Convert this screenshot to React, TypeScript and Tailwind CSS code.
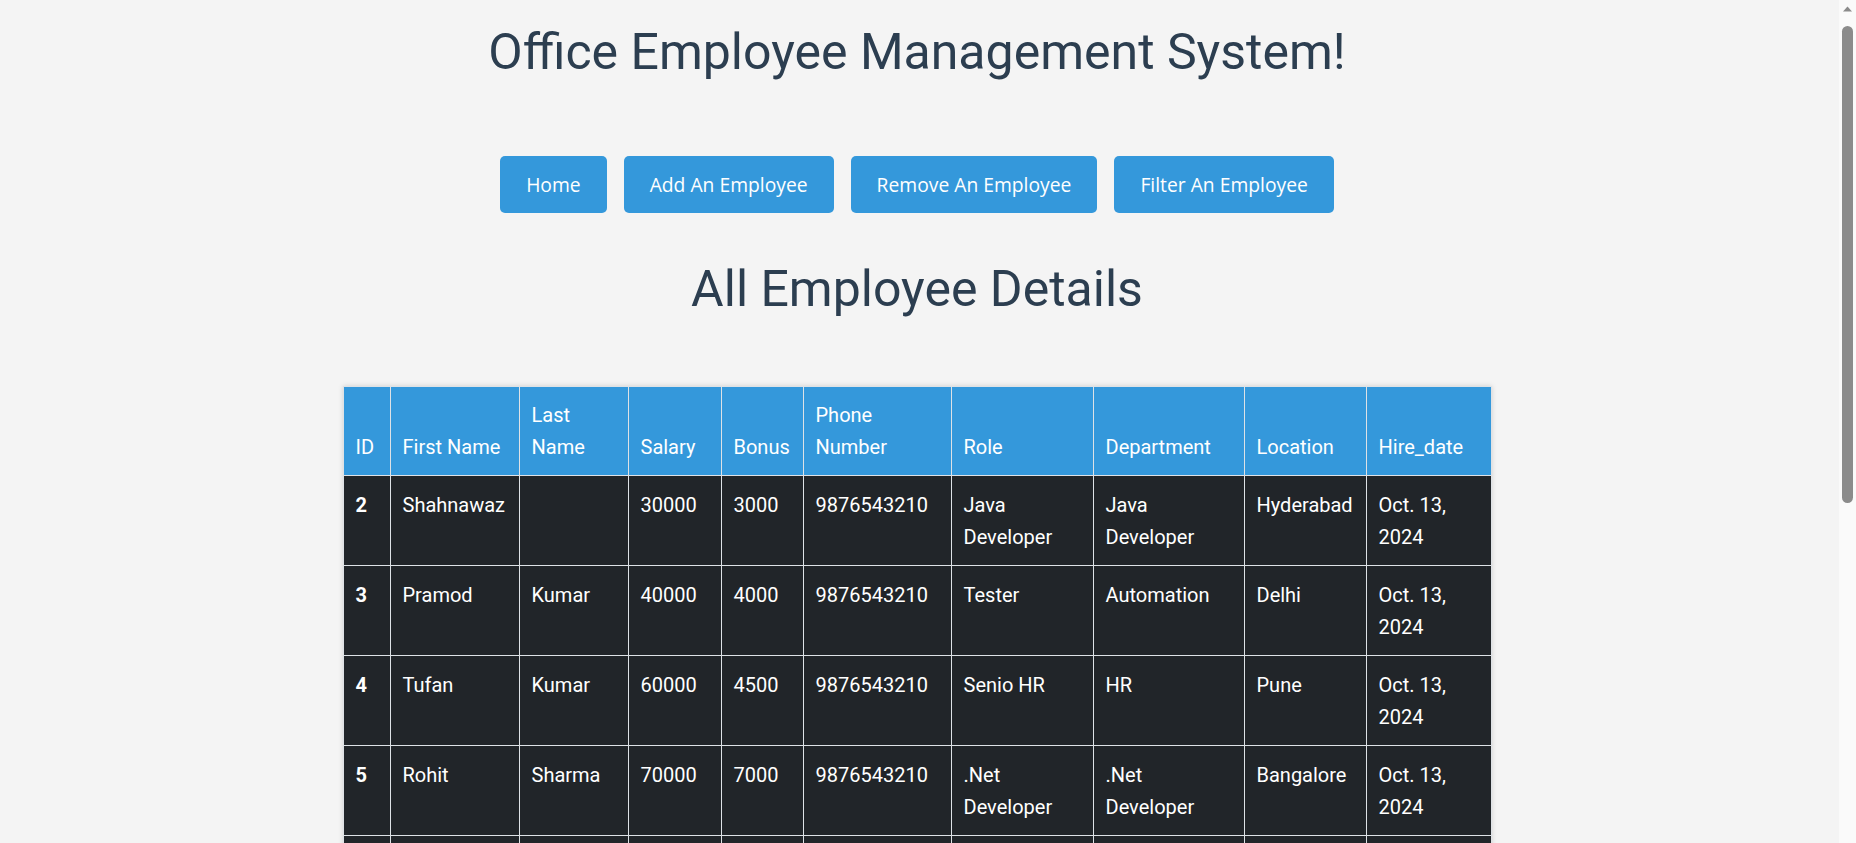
import React from "react";

type Employee = {
  id: number;
  first: string;
  last: string;
  salary: number;
  bonus: number;
  phone: string;
  role: string;
  dept: string;
  location: string;
  hired: string;
};

const employees: Employee[] = [
  { id: 2, first: "Shahnawaz", last: "", salary: 30000, bonus: 3000, phone: "9876543210", role: "Java Developer", dept: "Java Developer", location: "Hyderabad", hired: "Oct. 13, 2024" },
  { id: 3, first: "Pramod", last: "Kumar", salary: 40000, bonus: 4000, phone: "9876543210", role: "Tester", dept: "Automation", location: "Delhi", hired: "Oct. 13, 2024" },
  { id: 4, first: "Tufan", last: "Kumar", salary: 60000, bonus: 4500, phone: "9876543210", role: "Senio HR", dept: "HR", location: "Pune", hired: "Oct. 13, 2024" },
  { id: 5, first: "Rohit", last: "Sharma", salary: 70000, bonus: 7000, phone: "9876543210", role: ".Net Developer", dept: ".Net Developer", location: "Bangalore", hired: "Oct. 13, 2024" },
  { id: 6, first: "Virat", last: "Kohli", salary: 65000, bonus: 5000, phone: "9876543210", role: "Python Developer", dept: "Python", location: "Delhi", hired: "Oct. 13, 2024" },
  { id: 7, first: "Anil", last: "Verma", salary: 45000, bonus: 3500, phone: "9876543210", role: "Manager", dept: "Sales", location: "Mumbai", hired: "Oct. 13, 2024" },
  { id: 8, first: "Sneha", last: "Patil", salary: 50000, bonus: 4000, phone: "9876543210", role: "Designer", dept: "UI UX", location: "Pune", hired: "Oct. 13, 2024" },
  { id: 9, first: "Rahul", last: "Singh", salary: 55000, bonus: 5000, phone: "9876543210", role: "Tester", dept: "Manual", location: "Noida", hired: "Oct. 13, 2024" },
  { id: 10, first: "Amit", last: "Shah", salary: 80000, bonus: 8000, phone: "9876543210", role: "Team Lead", dept: "Java Developer", location: "Chennai", hired: "Oct. 13, 2024" },
  { id: 11, first: "Priya", last: "Nair", salary: 42000, bonus: 3000, phone: "9876543210", role: "Support", dept: "IT", location: "Kochi", hired: "Oct. 13, 2024" },
];

const columns = [
  { label: "ID", w: "w-[47px]" },
  { label: "First Name", w: "w-[129px]" },
  { label: "Last Name", w: "w-[109px]" },
  { label: "Salary", w: "w-[93px]" },
  { label: "Bonus", w: "w-[82px]" },
  { label: "Phone Number", w: "w-[148px]" },
  { label: "Role", w: "w-[142px]" },
  { label: "Department", w: "w-[151px]" },
  { label: "Location", w: "w-[122px]" },
  { label: "Hire_date", w: "w-[125px]" },
];

const navLinks = ["Home", "Add An Employee", "Remove An Employee", "Filter An Employee"];

const cell = "border border-[#dee2e6] px-3 pt-[13px] pb-[12px] align-top";

export default function App() {
  return (
    <div className="min-h-screen bg-[#f4f4f4] font-['Roboto',sans-serif] text-[#2c3e50] pt-6 pb-[50px] pr-[22px]">
      <h1 className="text-center text-[50px] leading-[56px] font-normal">Office Employee Management System!</h1>

      <nav className="flex justify-center gap-[17px] mt-[76px]">
        {navLinks.map((label) => (
          <a
            key={label}
            href="#"
            className="bg-[#3498db] text-white font-['Open_Sans',sans-serif] text-[19.3px] leading-[25px] py-4 px-[26px] rounded-[5px] hover:bg-[#2980b9] transition-colors"
          >
            {label}
          </a>
        ))}
      </nav>

      <h2 className="text-center text-[50px] leading-[56px] font-normal mt-[48px]">All Employee Details</h2>

      <table className="mt-[69px] mx-auto w-[1148px] table-fixed border-collapse text-[20px] leading-[32px] shadow-[0_0_5px_rgba(0,0,0,0.15)]">
        <colgroup>
          {columns.map((c) => (
            <col key={c.label} className={c.w} />
          ))}
        </colgroup>
        <thead>
          <tr className="bg-[#3498db] text-white">
            {columns.map((c) => (
              <th key={c.label} className="border border-[#dee2e6] px-3 py-3 text-left align-bottom font-normal">
                {c.label}
              </th>
            ))}
          </tr>
        </thead>
        <tbody className="bg-[#212529] text-white">
          {employees.map((e) => (
            <tr key={e.id}>
              <td className={`${cell} font-bold`}>{e.id}</td>
              <td className={cell}>{e.first}</td>
              <td className={cell}>{e.last}</td>
              <td className={cell}>{e.salary}</td>
              <td className={cell}>{e.bonus}</td>
              <td className={cell}>{e.phone}</td>
              <td className={cell}>{e.role}</td>
              <td className={cell}>{e.dept}</td>
              <td className={cell}>{e.location}</td>
              <td className={cell}>{e.hired}</td>
            </tr>
          ))}
        </tbody>
      </table>

      {/* browser scrollbar */}
      <div className="fixed top-0 right-0 h-screen w-[17px] bg-[#fafafa] flex flex-col items-center">
        <svg width="9" height="6" viewBox="0 0 9 6" className="mt-[6px]">
          <path d="M0 5.5 L4.5 0.5 L9 5.5 Z" fill="#8b8b8b" />
        </svg>
        <div className="mt-[14px] w-[11px] h-[477px] rounded-full bg-[#8b8b8b]" />
      </div>
    </div>
  );
}
